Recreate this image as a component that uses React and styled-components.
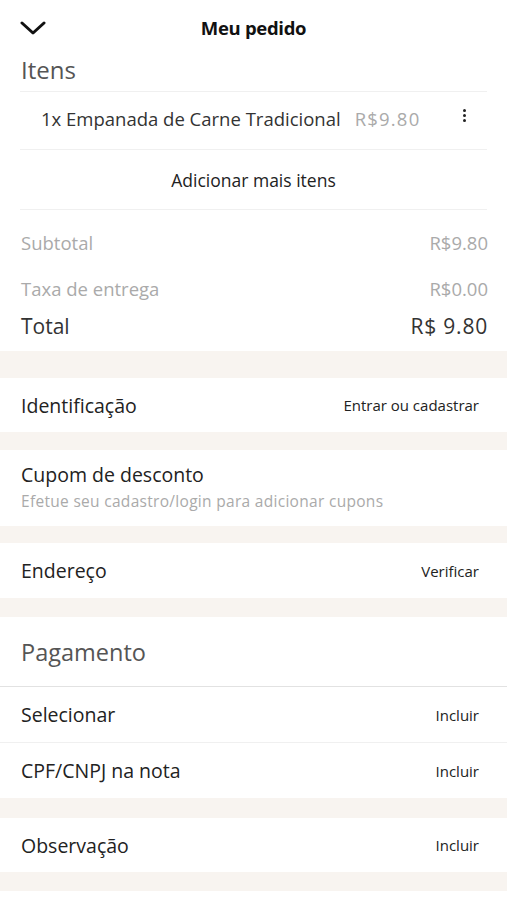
import React from 'react';
import styled, { createGlobalStyle } from 'styled-components';

const GlobalStyle = createGlobalStyle`
    body {
        margin: 0;
        background: #fff;
        font-family: "Open Sans", Lato, sans-serif;
        color: #333;
    }
`;

const summary = [
    { label: 'Subtotal', value: 'R$9.80' },
    { label: 'Taxa de entrega', value: 'R$0.00' },
];

function App() {
    return (
        <Page>
            <GlobalStyle />
            <Header>
                <BackButton>
                    <svg width="26" height="14" viewBox="0 0 26 14">
                        <polyline points="2,2 13,12 24,2" fill="none" stroke="#111" strokeWidth="3" strokeLinecap="round" strokeLinejoin="round" />
                    </svg>
                </BackButton>
                <Title>Meu pedido</Title>
            </Header>

            <SectionTitle>Itens</SectionTitle>
            <Divider />
            <ItemRow>
                <ItemName>1x Empanada de Carne Tradicional</ItemName>
                <ItemPrice>R$9.80</ItemPrice>
                <MoreButton>
                    <Dot /><Dot /><Dot />
                </MoreButton>
            </ItemRow>
            <Divider />
            <AddMore>Adicionar mais itens</AddMore>
            <Divider />

            <Summary>
                {summary.map((s) => (
                    <SummaryRow key={s.label}>
                        <span>{s.label}</span>
                        <span>{s.value}</span>
                    </SummaryRow>
                ))}
                <TotalRow>
                    <span>Total</span>
                    <span>R$ 9.80</span>
                </TotalRow>
            </Summary>

            <Band height={27} />
            <OptionRow height={54}>
                <OptionLabel>Identificação</OptionLabel>
                <OptionAction>Entrar ou cadastrar</OptionAction>
            </OptionRow>
            <Band height={18} />
            <CouponBlock>
                <OptionLabel>Cupom de desconto</OptionLabel>
                <CouponHint>Efetue seu cadastro/login para adicionar cupons</CouponHint>
            </CouponBlock>
            <Band height={17} />
            <OptionRow height={55}>
                <OptionLabel>Endereço</OptionLabel>
                <OptionAction>Verificar</OptionAction>
            </OptionRow>
            <Band height={19} />
            <PaymentTitle>Pagamento</PaymentTitle>
            <OptionRow height={55} bordered>
                <OptionLabel>Selecionar</OptionLabel>
                <OptionAction>Incluir</OptionAction>
            </OptionRow>
            <OptionRow height={55}>
                <OptionLabel>CPF/CNPJ na nota</OptionLabel>
                <OptionAction>Incluir</OptionAction>
            </OptionRow>
            <Band height={20} />
            <OptionRow height={54}>
                <OptionLabel>Observação</OptionLabel>
                <OptionAction>Incluir</OptionAction>
            </OptionRow>
            <Band height={19} />
            <Spacer />
        </Page>
    );
}

const Page = styled.div`
    width: 507px;
    display: flex;
    flex-direction: column;
`;

const Header = styled.div`
    height: 56px;
    display: flex;
    align-items: center;
    justify-content: center;
    position: relative;
`;

const BackButton = styled.div`
    position: absolute;
    left: 20px;
    top: 21px;
    display: flex;
`;

const Title = styled.h1`
    margin: 0 0 2px;
    font-size: 18.5px;
    font-weight: 700;
    color: #111;
    letter-spacing: -0.3px;
`;

const SectionTitle = styled.div`
    height: 35px;
    padding: 0 21px;
    display: flex;
    align-items: center;
    font-size: 24px;
    color: #555;
    margin-top: -4px;
    padding-bottom: 4px;
`;

const Divider = styled.div`
    height: 1px;
    margin: 0 20px;
    background: #f0f0f0;
`;

const ItemRow = styled.div`
    height: 57px;
    padding: 0 40px 0 41px;
    display: flex;
    align-items: center;
    font-size: 18.5px;
    & > span {
        margin-top: -4px;
    }
`;

const ItemName = styled.span`
    color: #333;
`;

const ItemPrice = styled.span`
    margin-left: 14px;
    color: #aaa;
    letter-spacing: 1.2px;
`;

const MoreButton = styled.div`
    margin-left: auto;
    margin-top: -10px;
    display: flex;
    flex-direction: column;
    gap: 2px;
    padding-right: 1px;
`;

const Dot = styled.span`
    width: 3px;
    height: 3px;
    border-radius: 50%;
    background: #222;
`;

const AddMore = styled.div`
    height: 59px;
    display: flex;
    align-items: center;
    justify-content: center;
    font-size: 17.5px;
    color: #222;
`;

const Summary = styled.div`
    padding: 9px 19px 10px 21px;
    display: flex;
    flex-direction: column;
`;

const SummaryRow = styled.div`
    height: 46px;
    display: flex;
    align-items: center;
    justify-content: space-between;
    font-size: 18.5px;
    color: #aaa;
`;

const TotalRow = styled(SummaryRow)`
    height: 30px;
    font-size: 21px;
    color: #333;
    & > span:last-child {
        letter-spacing: 0.8px;
    }
`;

const Band = styled.div`
    height: ${(props) => props.height}px;
    background: #f8f4f0;
`;

const OptionRow = styled.div`
    height: ${(props) => props.height}px;
    padding: 0 28px 0 21px;
    display: flex;
    align-items: center;
    justify-content: space-between;
    border-bottom: ${(props) => props.bordered ? '1px solid #f0f0f0' : 'none'};
`;

const OptionLabel = styled.span`
    font-size: 19.5px;
    color: #222;
`;

const OptionAction = styled.span`
    font-size: 15px;
    color: #222;
`;

const CouponBlock = styled.div`
    height: 76px;
    padding: 0 21px 4px;
    box-sizing: border-box;
    display: flex;
    flex-direction: column;
    justify-content: center;
    gap: 2px;
`;

const CouponHint = styled.span`
    font-size: 15.5px;
    letter-spacing: 0.3px;
    color: #aaa;
`;

const PaymentTitle = styled.div`
    height: 69px;
    padding: 0 21px;
    display: flex;
    align-items: center;
    font-size: 23.5px;
    color: #555;
    border-bottom: 1px solid #e2e2e2;
`;

const Spacer = styled.div`
    height: 10px;
`;

export default App;
